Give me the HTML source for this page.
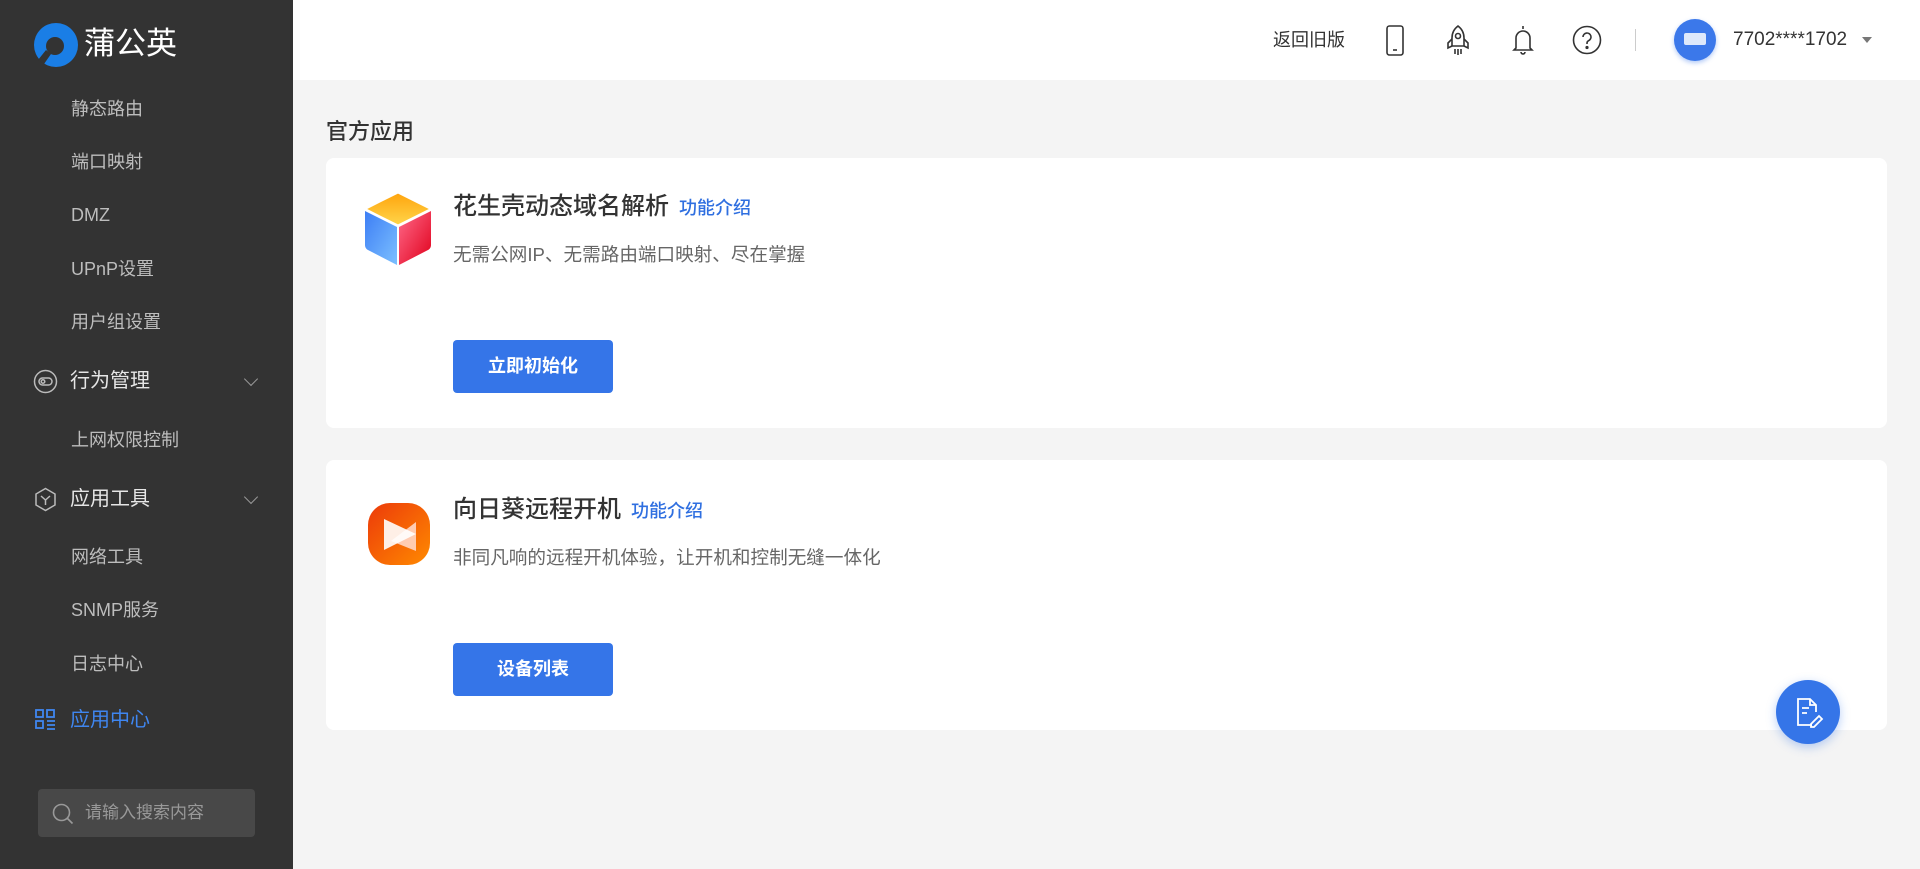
<!DOCTYPE html>
<html><head><meta charset="utf-8"><style>
*{margin:0;padding:0;box-sizing:border-box}
body{width:1920px;height:869px;overflow:hidden;background:#f4f4f4;font-family:"Liberation Sans","Noto Sans CJK SC",sans-serif;position:relative}
.side{position:absolute;left:0;top:0;width:293px;height:869px;background:#333}
.logot{position:absolute;left:84px;top:24px;color:#fff;font-size:31px;line-height:40px}
.mi{position:absolute;left:71px;color:#bdbdbd;font-size:18px;line-height:24px}
.gh{position:absolute;left:70px;color:#e6e6e6;font-size:20px;line-height:26px}
.chev{position:absolute;left:246px;width:10px;height:10px;border-right:1.5px solid #999;border-bottom:1.5px solid #999;transform:rotate(45deg)}
.search{position:absolute;left:38px;top:789px;width:217px;height:48px;background:#484848;border-radius:4px;color:#999;font-size:17px;line-height:48px;padding-left:47px}
.header{position:absolute;left:293px;top:0;right:0;height:80px;background:#fff}
.ht{position:absolute;top:27px;font-size:18px;color:#333;line-height:24px}
.card{position:absolute;left:326px;width:1561px;background:#fff;border-radius:8px}
.t{position:absolute;left:127px;font-size:24px;color:#333;font-weight:500;line-height:30px}
.t span{color:#2f6fe0;font-size:18px;margin-left:10px;font-weight:500}
.d{position:absolute;left:127px;font-size:18.6px;color:#666;line-height:24px}
.btn{position:absolute;left:127px;width:160px;height:53px;background:#3575e8;border-radius:4px;color:#fff;font-size:18px;font-weight:bold;text-align:center;line-height:53px}
</style></head><body>
<div class="side">
<svg style="position:absolute;left:33px;top:22px" width="46" height="46" viewBox="0 0 46 46"><circle cx="23" cy="23" r="22" fill="#1a7ee6"/><circle cx="22" cy="24" r="9" fill="#333"/><path d="M13 28L5 38 11 42 18 32z" fill="#333"/></svg>
<div class="logot">蒲公英</div>
<div class="mi" style="top:97px">静态路由</div>
<div class="mi" style="top:150px">端口映射</div>
<div class="mi" style="top:203px">DMZ</div>
<div class="mi" style="top:257px">UPnP设置</div>
<div class="mi" style="top:310px">用户组设置</div>
<svg style="position:absolute;left:33px;top:369px" width="25" height="25" viewBox="0 0 25 25" fill="none" stroke="#bbb" stroke-width="1.5"><circle cx="12.5" cy="12.5" r="11"/><rect x="6" y="9" width="13" height="7" rx="3.5"/><circle cx="10" cy="12.5" r="1.8"/></svg>
<div class="gh" style="top:368px">行为管理</div><div class="chev" style="top:374px"></div>
<div class="mi" style="top:428px">上网权限控制</div>
<svg style="position:absolute;left:34px;top:487px" width="23" height="25" viewBox="0 0 23 25" fill="none" stroke="#bbb" stroke-width="1.5"><path d="M11.5 1.5L21 7v11l-9.5 5.5L2 18V7z"/><path d="M7 9l4.5 4 4.5-4M11.5 13v5"/></svg>
<div class="gh" style="top:486px">应用工具</div><div class="chev" style="top:492px"></div>
<div class="mi" style="top:545px">网络工具</div>
<div class="mi" style="top:598px">SNMP服务</div>
<div class="mi" style="top:652px">日志中心</div>
<svg style="position:absolute;left:35px;top:709px" width="21" height="21" viewBox="0 0 21 21" fill="none" stroke="#3f86f0" stroke-width="1.8"><rect x="1" y="1" width="7" height="7"/><rect x="12" y="1" width="7" height="7"/><rect x="1" y="12" width="7" height="7"/><path d="M12 12h8M12 16h8M12 20h8"/></svg>
<div class="gh" style="top:707px;color:#3f86f0">应用中心</div>
<div class="search">请输入搜索内容<svg style="position:absolute;left:14px;top:14px" width="22" height="22" viewBox="0 0 22 22" fill="none" stroke="#999" stroke-width="1.6"><circle cx="9.5" cy="9.5" r="8"/><path d="M15.5 15.5l5 5"/></svg></div>
</div>
<div class="header">
<div class="ht" style="left:980px;top:28px">返回旧版</div>
<svg style="position:absolute;left:1092px;top:25px" width="20" height="31" viewBox="0 0 20 31" fill="none" stroke="#333" stroke-width="1.6"><rect x="2" y="1" width="16" height="29" rx="2.5"/><path d="M8 25h4"/></svg>
<svg style="position:absolute;left:1152px;top:25px" width="26" height="31" viewBox="0 0 26 31" fill="none" stroke="#333" stroke-width="1.6"><path d="M13 1c4 3 6 7 6 12v8H7v-8c0-5 2-9 6-12z"/><circle cx="13" cy="11" r="2.5"/><path d="M7 14l-4 4v5l4-2M19 14l4 4v5l-4-2M10 24v5M13 24v6M16 24v5"/></svg>
<svg style="position:absolute;left:1218px;top:24px" width="24" height="32" viewBox="0 0 24 32" fill="none" stroke="#333" stroke-width="1.6"><path d="M12 2v3M5 24V14a7 7 0 0 1 14 0v10l2 2H3z"/><path d="M10 28a2 2 0 0 0 4 0"/></svg>
<svg style="position:absolute;left:1279px;top:25px" width="30" height="30" viewBox="0 0 30 30" fill="none" stroke="#333" stroke-width="1.6"><circle cx="15" cy="15" r="13.5"/><path d="M11 12a4 4 0 1 1 5.5 3.7c-1 .5-1.5 1.3-1.5 2.5V19"/><circle cx="15" cy="22.5" r=".8" fill="#333"/></svg>
<div style="position:absolute;left:1342px;top:29px;width:1px;height:22px;background:#ccc"></div>
<div style="position:absolute;left:1381px;top:19px;width:42px;height:42px;border-radius:50%;background:#3b78ea;box-shadow:0 2px 5px rgba(59,120,234,.4)"><div style="position:absolute;left:10px;top:14px;width:22px;height:12px;border-radius:2px;background:#dde8fb"></div></div>
<div class="ht" style="left:1440px;top:28px;font-size:19px">7702****1702</div>
<div style="position:absolute;left:1569px;top:37px;border:5px solid transparent;border-top:6px solid #777"></div>
</div>
<div style="position:absolute;left:326px;top:114px;font-size:22px;color:#333;font-weight:500">官方应用</div>
<div class="card" style="top:158px;height:270px">
<svg style="position:absolute;left:38px;top:34px" width="68" height="74" viewBox="0 0 68 74"><defs><linearGradient id="a" x1="0" y1="0" x2="0" y2="1"><stop offset="0" stop-color="#ffa40d"/><stop offset="1" stop-color="#ffd54a"/></linearGradient><linearGradient id="b" x1="0" y1="0" x2="1" y2="1"><stop offset="0" stop-color="#3d7ef5"/><stop offset="1" stop-color="#7cc0ff"/></linearGradient><linearGradient id="c" x1="0" y1="0" x2="1" y2="1"><stop offset="0" stop-color="#ff6a8a"/><stop offset="1" stop-color="#e0001b"/></linearGradient></defs><path d="M34 1L66 17 34 33 2 17z" fill="url(#a)" stroke="#fff" stroke-width="1" stroke-linejoin="round"/><path d="M1 19l32 16v38L4 58c-2-1-3-3-3-5z" fill="url(#b)"/><path d="M67 19L35 35v38l29-15c2-1 3-3 3-5z" fill="url(#c)"/></svg>
<div class="t" style="top:34px">花生壳动态域名解析<span>功能介绍</span></div>
<div class="d" style="top:85px">无需公网IP、无需路由端口映射、尽在掌握</div>
<div class="btn" style="top:182px">立即初始化</div>
</div>
<div class="card" style="top:460px;height:270px">
<svg style="position:absolute;left:41px;top:42px" width="64" height="64" viewBox="0 0 64 64"><defs><linearGradient id="o" x1="0" y1="0" x2="1" y2="1"><stop offset="0" stop-color="#ec3a0a"/><stop offset="1" stop-color="#ff8a00"/></linearGradient></defs><rect x="1" y="1" width="62" height="62" rx="22" fill="url(#o)"/><path d="M49 20v29L24 39z" fill="#ffd6c4" opacity=".9"/><path d="M17 17L49 32 17 48z" fill="#fff" opacity=".9"/></svg>
<div class="t" style="top:35px">向日葵远程开机<span>功能介绍</span></div>
<div class="d" style="top:86px">非同凡响的远程开机体验，让开机和控制无缝一体化</div>
<div class="btn" style="top:183px">设备列表</div>
</div>
<div style="position:absolute;left:1776px;top:680px;width:64px;height:64px;border-radius:50%;background:#3575e8;box-shadow:0 3px 10px rgba(53,117,232,.35)">
<svg style="position:absolute;left:18px;top:16px" width="30" height="32" viewBox="0 0 30 32" fill="none" stroke="#fff" stroke-width="1.8"><path d="M18 29H4V3h12l6 6v7"/><path d="M16 3v6h6M8 12h7M8 17h5"/><path d="M17 28l8-8 3 3-8 8h-3z"/></svg></div>
</body></html>
